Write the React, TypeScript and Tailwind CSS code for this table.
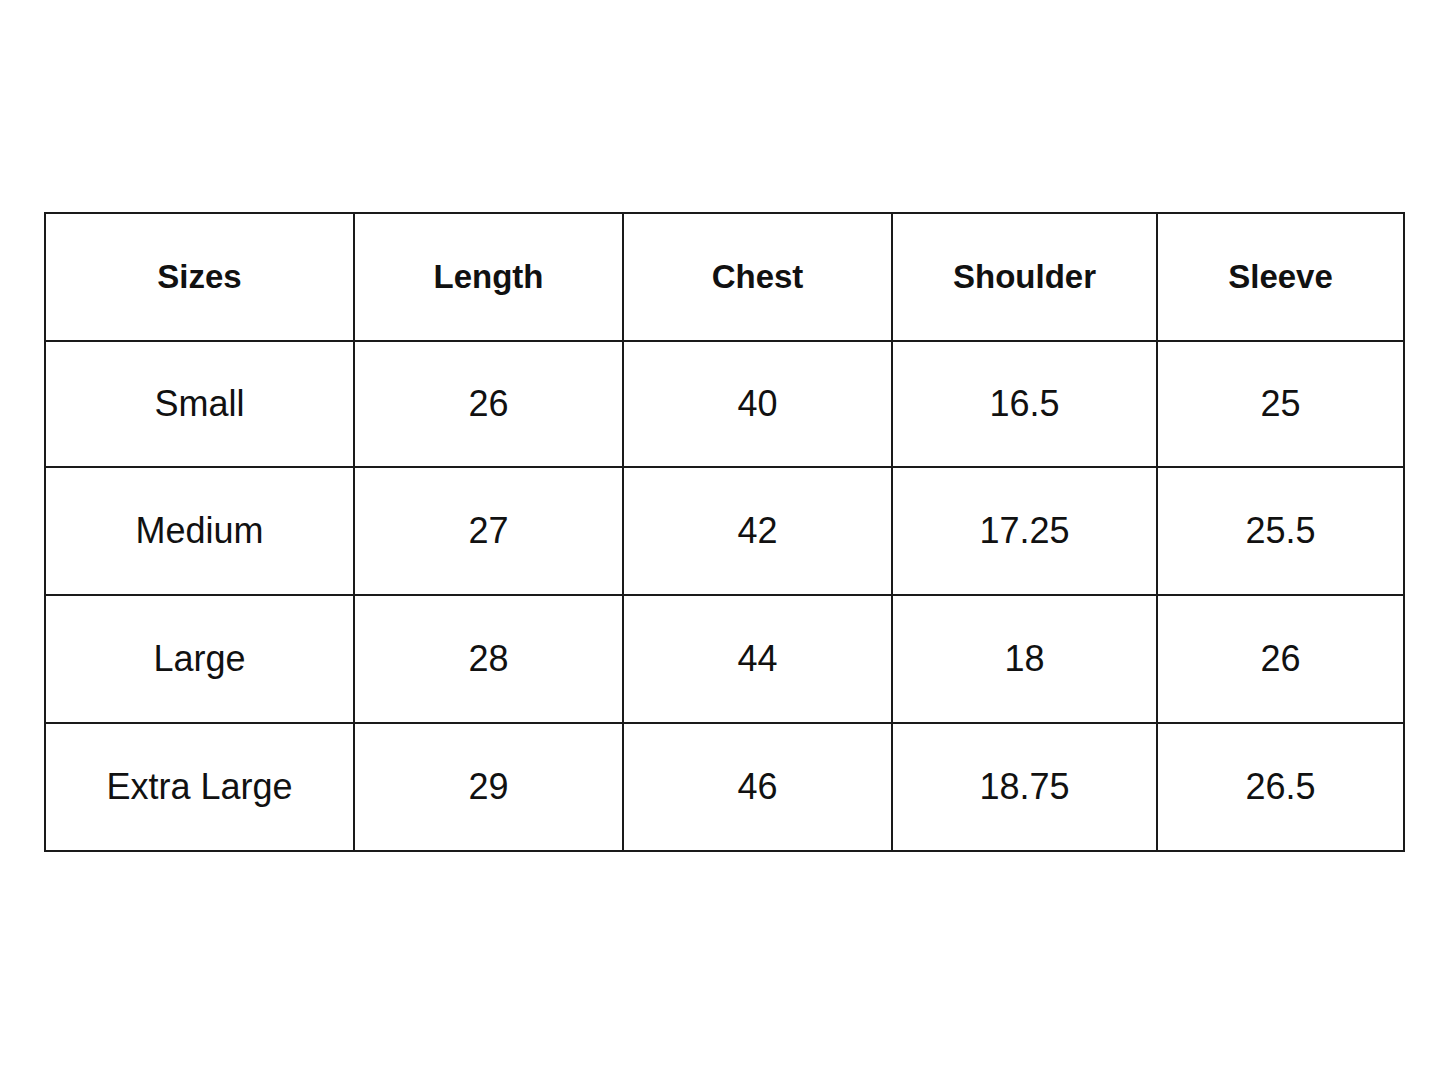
import React from "react";

// size chart (inches)
const headers = ["Sizes", "Length", "Chest", "Shoulder", "Sleeve"];

const rows = [
  ["Small", "26", "40", "16.5", "25"],
  ["Medium", "27", "42", "17.25", "25.5"],
  ["Large", "28", "44", "18", "26"],
  ["Extra Large", "29", "46", "18.75", "26.5"],
];

export default function App() {
  return (
    <main className="min-h-[1086px] w-full bg-white pt-[212px] pl-[44px] font-['Liberation_Sans',Arial,sans-serif] text-[#111]">
      <table className="w-[1359px] table-fixed border-collapse border-2 border-[#1a1a1a]">
        <colgroup>
          <col className="w-[309px]" />
          <col className="w-[269px]" />
          <col className="w-[269px]" />
          <col className="w-[265px]" />
          <col className="w-[247px]" />
        </colgroup>
        <thead>
          <tr className="h-[128px]">
            {headers.map((h) => (
              <th
                key={h}
                className="border-2 border-[#1a1a1a] text-center align-middle text-[33px] font-bold"
              >
                {h}
              </th>
            ))}
          </tr>
        </thead>
        <tbody>
          {rows.map((r, i) => (
            <tr key={r[0]} className={i === 0 ? "h-[126px]" : "h-[128px]"}>
              {r.map((c, j) => (
                <td
                  key={j}
                  className="border-2 border-[#1a1a1a] text-center align-middle text-[36px]"
                >
                  {c}
                </td>
              ))}
            </tr>
          ))}
        </tbody>
      </table>
    </main>
  );
}
